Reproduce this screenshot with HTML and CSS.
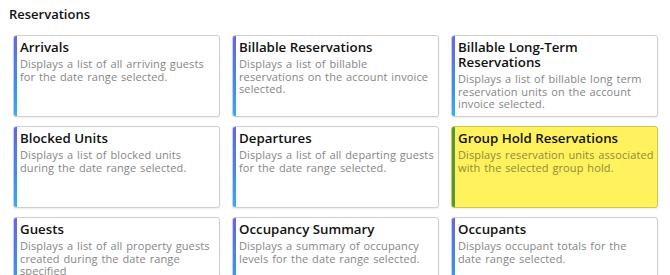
FILE: index.html
```html
<!DOCTYPE html>
<html lang="en">
<head>
  <meta charset="UTF-8" />
  <meta name="viewport" content="width=device-width, initial-scale=1.0"/>
  <title>Reports</title>
  <link rel="stylesheet" href="styles.css">
</head>
<body>
  <h2 class="section-title">Reservations</h2>
  <div class="report-grid">
    <div class="report-card">
      <h3>Arrivals</h3>
      <p>Displays a list of all arriving guests for the date range selected.</p>
    </div>
    <div class="report-card">
      <h3>Billable Reservations</h3>
      <p>Displays a list of billable reservations on the account invoice selected.</p>
    </div>
    <div class="report-card">
      <h3>Billable Long-Term Reservations</h3>
      <p>Displays a list of billable long term reservation units on the account invoice selected.</p>
    </div>
    <div class="report-card">
      <h3>Blocked Units</h3>
      <p>Displays a list of blocked units during the date range selected.</p>
    </div>
    <div class="report-card">
      <h3>Departures</h3>
      <p>Displays a list of all departing guests for the date range selected.</p>
    </div>
    <div class="report-card highlight">
      <h3>Group Hold Reservations</h3>
      <p>Displays reservation units associated with the selected group hold.</p>
    </div>
    <div class="report-card">
      <h3>Guests</h3>
      <p>Displays a list of all property guests created during the date range specified</p>
    </div>
    <div class="report-card">
      <h3>Occupancy Summary</h3>
      <p>Displays a summary of occupancy levels for the date range selected.</p>
    </div>
    <div class="report-card">
      <h3>Occupants</h3>
      <p>Displays occupant totals for the date&nbsp;range&nbsp;selected.</p>
    </div>
  </div>
</body>
</html>
```

FILE: styles.css
```css
body {
  font-family: "Open Sans", Arial, sans-serif;
  margin: 0;
  padding: 5px 12px 0 13px;
  background: #fff;
  color: #111;
}
.section-title {
  margin: 0 0 12px -4px;
  font-size: 13px;
  font-weight: 600;
  line-height: 18px;
}
.report-grid {
  display: grid;
  grid-template-columns: repeat(3, 207px);
  grid-auto-rows: 82px;
  column-gap: 12px;
  row-gap: 9px;
}
.report-card {
  position: relative;
  border: 1px solid #cfcfcf;
  border-radius: 3px;
  padding: 4px 2.5px 0 6px;
  background: #fff;
  box-shadow: 0 1px 2px rgba(0, 0, 0, 0.08);
  overflow: hidden;
}
.report-card::before {
  content: "";
  position: absolute;
  left: 0;
  top: 0;
  bottom: 0;
  width: 3px;
  background: linear-gradient(#6a62e8, #3a8ff0 60%, #2fb0f5);
}
.report-card h3 {
  margin: 0;
  font-size: 13.3px;
  font-weight: 600;
  line-height: 15px;
}
.report-card p {
  margin: 3px 0 0;
  font-size: 11px;
  line-height: 12.5px;
  letter-spacing: 0.12px;
  word-spacing: 0.8px;
  color: #868686;
}
.report-card.highlight {
  background: #fff25c;
  border-color: #cfc94a;
}
.report-card.highlight::before {
  background: #55963a;
}
.report-card.highlight p {
  color: #8f8a3a;
}
```
